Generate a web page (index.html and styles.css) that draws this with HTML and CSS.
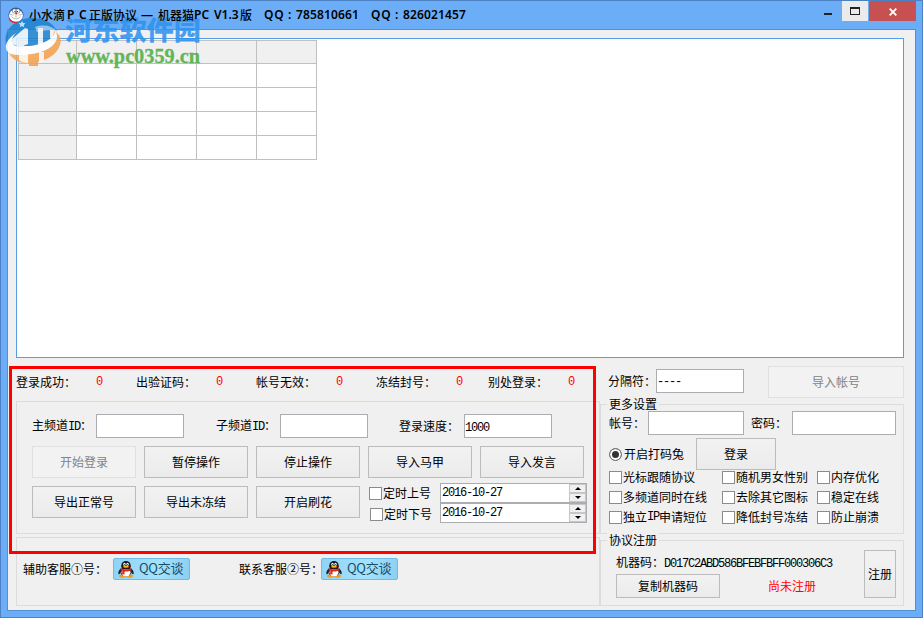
FILE: index.html
```html
<!DOCTYPE html>
<html lang="zh-CN">
<head>
<meta charset="utf-8">
<title>机器猫PC V1.3版</title>
<link rel="stylesheet" href="styles.css">
</head>
<body>
<svg class="defs" width="0" height="0" aria-hidden="true">
  <defs>
    <linearGradient id="orange" x1="0" y1="0" x2="1" y2="1"><stop offset="0" stop-color="#f6b36c"/><stop offset="1" stop-color="#f39b45"/></linearGradient>
    <symbol id="penguin" viewBox="0 0 16 17">
      <ellipse cx="4.700" cy="15" rx="3.700" ry="1.800" fill="#f39a1e"/><ellipse cx="11.300" cy="15" rx="3.700" ry="1.800" fill="#f39a1e"/>
      <path d="M3.200 7C1 9 0 11 .4 13c.6.6 1.600-.3 2.200-1.200zM12.800 7c2.200 2 3.200 4 2.800 6-.6.6-1.600-.3-2.200-1.200z" fill="#1b1b24"/>
      <ellipse cx="8" cy="10.500" rx="5.600" ry="5" fill="#1b1b24"/><ellipse cx="8" cy="11.300" rx="4.500" ry="4.100" fill="#fff"/>
      <path d="M8 0C4.600 0 3.300 2.400 3.200 5.300 3.200 7.500 5 8.500 8 8.500s4.800-1 4.800-3.200C12.700 2.400 11.400 0 8 0z" fill="#1b1b24"/>
      <ellipse cx="6.500" cy="3.300" rx="1.200" ry="1.500" fill="#fff"/><ellipse cx="9.500" cy="3.300" rx="1.200" ry="1.500" fill="#fff"/>
      <circle cx="6.800" cy="3.500" r=".55"/><circle cx="9.200" cy="3.500" r=".55"/>
      <ellipse cx="8" cy="5.700" rx="3" ry="1" fill="#f7b21c"/>
      <path d="M2.800 7.100C5.500 9 10.500 9 13.200 7.100l.3 2C11 10.500 9 10.700 6.600 10.500l-.2 3-2.300-.3.300-3.400-1.900-.9z" fill="#e3261d"/>
    </symbol>
  </defs>
</svg>
<div class="window">
  <header class="titlebar">
    <svg class="appicon" width="16" height="16" viewBox="0 0 16 16">
      <circle cx="8" cy="8" r="7.600" fill="#315b9d"/><ellipse cx="8" cy="8.600" rx="7" ry="6.300" fill="#fff"/>
      <ellipse cx="6.300" cy="4" rx="1.900" ry="2.200" fill="#fff" stroke="#444" stroke-width=".5"/><ellipse cx="10" cy="4" rx="1.900" ry="2.200" fill="#fff" stroke="#444" stroke-width=".5"/>
      <circle cx="7" cy="4.500" r=".6"/><circle cx="9.300" cy="4.500" r=".6"/><circle cx="8.200" cy="6.500" r="1" fill="#d22"/>
      <path d="M8 7.500v3M3.500 9.500c2 3 7 3 9 0M2 7.500l3.500.6M14 7.500l-3.500.6" fill="none" stroke="#777" stroke-width=".5"/>
      <path d="M1 11.500C3 15.300 6.500 15.800 9.500 15" fill="none" stroke="#d22" stroke-width="1.200"/>
    </svg>
    <div class="title">
      <span class="t1">小水滴</span><span class="t2">P</span><span class="t3">C</span><span class="t4">正版协议</span><span class="t5">—</span><span class="t6">机器猫</span><span class="t7">PC</span><span class="t8">V1.3</span><span class="t9">版</span><span class="t10">QQ</span><span class="t11">:</span><span class="t12">785810661</span><span class="t10">QQ</span><span class="t11">:</span><span class="t12">826021457</span>
    </div>
    <div class="controls">
      <div class="ctl min"><i></i></div>
      <div class="ctl max"><i></i></div>
      <div class="ctl close"><svg width="8" height="8" viewBox="0 0 8 8"><path d="M.7.7l6.600 6.600M7.300.7L.7 7.300" stroke="#fff" stroke-width="1.900"/></svg></div>
    </div>
  </header>
  <main class="client">
    <section class="list">
      <div class="grid">
        <b></b><b></b><b></b><b></b><b></b>
        <b></b><i></i><i></i><i></i><i></i>
        <b></b><i></i><i></i><i></i><i></i>
        <b></b><i></i><i></i><i></i><i></i>
        <b></b><i></i><i></i><i></i><i></i>
      </div>
    </section>
    <div class="lower">
      <div class="left">
        <div class="stats">
          <span>登录成功：</span><em>0</em><span>出验证码：</span><em>0</em><span>帐号无效：</span><em>0</em><span>冻结封号：</span><em>0</em><span>别处登录：</span><em>0</em>
        </div>
        <section class="group main">
          <div class="fields">
            <label>主频道<span class="m">ID</span>：</label><div class="input"></div>
            <label>子频道<span class="m">ID</span>：</label><div class="input"></div>
            <label>登录速度：</label><div class="input"><span class="m">1000</span></div>
          </div>
          <div class="buttons">
            <div class="btn off">开始登录</div><div class="btn">暂停操作</div><div class="btn">停止操作</div><div class="btn">导入马甲</div><div class="btn">导入发言</div>
          </div>
          <div class="buttons second">
            <div class="btn">导出正常号</div><div class="btn">导出未冻结</div><div class="btn">开启刷花</div>
            <div class="timers">
              <div class="check"><i></i>定时上号</div>
              <div class="check shifted"><i></i>定时下号</div>
            </div>
            <div class="dates">
              <div class="date"><span class="m">2016-10-27</span><div class="spin"><u><s class="up"></s></u><u><s class="down"></s></u></div></div>
              <div class="date"><span class="m">2016-10-27</span><div class="spin"><u><s class="up"></s></u><u><s class="down"></s></u></div></div>
            </div>
          </div>
        </section>
        <section class="group support">
          <span class="s1">辅助客服①号：</span>
          <div class="qq"><svg width="16" height="17"><use href="#penguin"/></svg><span>QQ交谈</span></div>
          <span class="s2">联系客服②号：</span>
          <div class="qq"><svg width="16" height="17"><use href="#penguin"/></svg><span>QQ交谈</span></div>
        </section>
      </div>
      <div class="right">
        <div class="import"><label>分隔符：</label><div class="input"><span class="m">----</span></div><div class="btn off">导入帐号</div></div>
        <section class="group more">
          <h2>更多设置</h2>
          <div class="account"><label>帐号：</label><div class="input a"></div><label class="pw">密码：</label><div class="input p"></div></div>
          <div class="captcha"><span class="radio"></span><span class="rl">开启打码兔</span><div class="btn">登录</div></div>
          <div class="options">
            <div class="check"><i></i>光标跟随协议</div><div class="check"><i></i>随机男女性别</div><div class="check"><i></i>内存优化</div>
            <div class="check"><i></i>多频道同时在线</div><div class="check"><i></i>去除其它图标</div><div class="check"><i></i>稳定在线</div>
            <div class="check"><i></i>独立<span class="m">IP</span>申请短位</div><div class="check"><i></i>降低封号冻结</div><div class="check"><i></i>防止崩溃</div>
          </div>
        </section>
        <section class="group register">
          <h2>协议注册</h2>
          <div class="regbody">
            <div class="reginfo">
              <div class="code">机器码：<span class="m">D017C2ABD586BFEBFBFF000306C3</span></div>
              <div class="copy"><div class="btn">复制机器码</div><span class="red">尚未注册</span></div>
            </div>
            <div class="btn reg">注册</div>
          </div>
        </section>
      </div>
    </div>
  </main>
  <div class="highlight"></div>
  <svg class="watermark" width="210" height="75" viewBox="0 0 210 75">
    <g opacity=".88">
      <path d="M6 45C3 31 14 18 32 18c12 0 21 5 25 13-10-4-22-1-31 5L12 50z" fill="#1e83cf"/>
      <path d="M24 28h26v18H24z" fill="#1e83cf"/>
      <path d="M8 51c12 5 34 4 44-5l2-15c6 3 8 8 6 14-3 9-11 14-22 17v4h-9v-3C19 64 11 59 8 51z" fill="url(#orange)"/>
      <path d="M12 39L25 28l3 1v15l-8 3-8-3z" fill="#e6f2fc"/>
      <path d="M38 28h5v16h-5z" fill="#e6f2fc"/>
      <path d="M19 54h9v9c-4 0-7-1-9-3zM39 52h5v9l-5 2z" fill="#fff" opacity=".85"/>
      <path d="M16 33C5 40 3 50 10 53.500c11 4 34 0 43-8.500 5-5 5-10 2-14 0 6-7 10.500-16 13-10 3-21 4-25 1-4-3-2-8 2-12z" fill="#fff"/>
      <path d="M35 27c9-3 17-1 22 4-6-1-13-1-20 1z" fill="#fff" opacity=".55"/>
      <path d="M22 21l1.200 2 2.300.3-1.700 1.600.4 2.300-2.200-1.100-2.200 1.100.5-2.300-1.700-1.600 2.300-.3z" fill="#cbe7ff"/>
    </g>
    <text class="wm1" x="65" y="40" textLength="136" lengthAdjust="spacingAndGlyphs">河东软件园</text>
    <text class="wm2" x="66" y="63" textLength="134" lengthAdjust="spacingAndGlyphs">www.pc0359.cn</text>
  </svg>
</div>
</body>
</html>
```

FILE: styles.css
```css
* { box-sizing: border-box; }
body { margin: 0; font: 12px/16px "Noto Sans CJK SC", sans-serif; color: #000; overflow: hidden; }
i, em, u, s, b { font-style: normal; text-decoration: none; font-weight: normal; display: block; }
.defs { position: absolute; }
.window { position: relative; width: 923px; height: 618px; background: #6badf6; border: 1px solid #4c82c3; padding: 0 6px 6px; white-space: nowrap; }

.titlebar { position: relative; z-index: 2; display: flex; height: 28px; align-items: flex-start; }
.appicon { margin: 6px 0 0 1px; }
.title { display: flex; flex: 1; margin: 5px 0 0 5px; height: 17px; line-height: 17px; font-family: "Noto Sans", "Noto Sans CJK SC", sans-serif; font-weight: 600; font-size: 12px; }
.title span { flex: none; }
.t1, .t4, .t6, .t9 { font-family: "Noto Sans CJK SC", sans-serif; font-weight: 500; }
.t1 { width: 38px; }
.t2 { width: 12px; }
.t3 { width: 10px; }
.t4 { width: 52px; }
.t5 { width: 17px; }
.t6 { width: 36px; }
.t7 { width: 20px; }
.t8 { width: 26px; }
.t9 { width: 24px; }
.t10 { width: 24px; letter-spacing: .8px; }
.t11 { width: 8px; }
.t12 { width: 75px; letter-spacing: .13px; }
.controls { display: flex; height: 20px; }
.ctl { display: flex; align-items: center; justify-content: center; height: 20px; }
.min { width: 28px; }
.min i { width: 8px; height: 2px; background: #222; margin-top: 6px; }
.max { width: 26px; background: #ebebeb; margin-right: 1px; }
.max i { width: 10px; height: 8px; border: 1px solid #222; border-top-width: 2px; }
.close { width: 47px; background: #c75050; }
.close svg { margin: 1px 0 0 1px; }

.client { height: 582px; border: 1px solid #5490d2; background: #f0f0f0; padding: 8px 11px 0 8px; }
.list { width: 888px; height: 320px; background: #fff; border: 1px solid #569de5; padding: 1px; }
.grid { display: grid; width: 299px; height: 120px; grid-template-columns: 58px repeat(4, 60px); grid-template-rows: 23px repeat(4, 24px); border-top: 1px solid #c0c0c0; border-left: 1px solid #c0c0c0; }
.grid b, .grid i { border-right: 1px solid #c0c0c0; border-bottom: 1px solid #c0c0c0; }
.grid b { background: #f0f0f0; }

.lower { display: flex; margin-top: 8px; height: 240px; }
.left { width: 584px; }
.right { width: 304px; }
.m { font-family: "Liberation Mono", monospace; font-size: 12px; letter-spacing: -1.2px; }
.group { border: 1px solid #dcdcdc; }
.btn { display: flex; align-items: center; justify-content: center; flex: none; width: 104px; height: 32px; border: 1px solid #bcbcbc; background: linear-gradient(#f2f2f2, #ebebeb); }
.btn.off { color: #838383; border-color: #e0e0e0; background: #f2f2f2; }
.input { flex: none; width: 88px; height: 24px; border: 1px solid #abadb3; background: #fff; line-height: 21px; }

.stats { display: grid; grid-template-columns: 80px 40px 80px 40px 80px 40px 80px 32px 80px 21px; height: 35px; padding-top: 8px; }
.stats em { color: #f00; font: 12px/17px "Liberation Mono", monospace; }
.main { height: 133px; padding: 12px 0 0 15px; }
.fields { display: grid; grid-template-columns: 64px 120px 64px 119px 65px 88px; align-items: center; }
.buttons { display: flex; gap: 8px; margin-top: 8px; }
.check { display: flex; align-items: center; height: 20px; }
.check i { flex: none; width: 13px; height: 13px; border: 1px solid #8b8b8b; background: #fff; margin-right: 1px; }
.timers { margin: -3px 0 0 1px; width: 63px; }
.shifted { margin: 1px 0 0 1px; }
.timers + .dates { margin-top: -3px; }
.date { display: flex; width: 147px; height: 20px; border: 1px solid #abadb3; background: #fff; line-height: 18px; padding-left: 1px; }
.date .m { flex: 1; }
.spin { width: 17px; }
.spin u { height: 9px; border: 1px solid #c6c6c6; background: #f0f0f0; display: flex; align-items: center; justify-content: center; }
.up, .down { border: 3px solid transparent; border-top: 0; border-bottom: 3px solid #000; width: 0; height: 0; }
.down { border-bottom: 0; border-top: 3px solid #000; }
.support { height: 69px; margin-top: 3px; padding: 20px 0 0 6px; display: flex; align-items: flex-start; }
.support > span { margin-top: 3px; flex: none; }
.s1 { width: 90px; }
.s2 { width: 82px; margin-left: 49px; }
.qq { display: flex; align-items: center; flex: none; width: 77px; height: 22px; padding-left: 4px; border: 1px solid #6cbce8; border-radius: 2px; background: linear-gradient(100deg, #8fd4f5, #a5e2fd 60%, #8acff2); color: #174c68; font-size: 13px; }
.qq span { margin: -2px 0 0 5px; letter-spacing: -.3px; }

.import { display: flex; height: 38px; padding-left: 8px; }
.import label { width: 48px; margin-top: 7px; }
.import .input { margin: 3px 24px 0 0; line-height: 19px; }
.import .btn { width: 136px; }
h2 { font-size: 12px; line-height: 16px; font-weight: normal; margin: 0 0 0 6px; padding: 0 2px; width: 52px; height: 16px; background: #f0f0f0; }
.more { height: 130px; }
.more h2 { margin-top: -9px; }
.account { display: flex; margin: -1px 0 0 8px; align-items: center; height: 24px; }
.account label { width: 39px; }
.account .a { width: 96px; }
.account .pw { margin-left: 7px; width: 41px; }
.account .p { width: 104px; }
.captcha { display: flex; align-items: center; margin: 3px 0 0 8px; height: 32px; }
.radio { width: 13px; height: 13px; border: 1px solid #777; border-radius: 50%; background: #333; box-shadow: inset 0 0 0 2px #fff; }
.rl { width: 72px; margin-left: 2px; }
.captcha .btn { width: 80px; }
.options { display: grid; grid-template-columns: 113px 95px 80px; grid-auto-rows: 20px; margin: -3px 0 0 8px; }
.register { height: 66px; margin-top: 6px; }
.register h2 { margin-top: -9px; }
.regbody { display: flex; margin: 2px 0 0 15px; }
.reginfo { width: 248px; }
.code { height: 24px; padding-top: 4px; }
.copy { display: flex; align-items: center; }
.copy .btn { height: 24px; }
.red { color: #f00; margin-left: 48px; }
.reg { width: 32px; height: 48px; }

.highlight { position: absolute; left: 8px; top: 365px; width: 587px; height: 188px; border: 3px solid #f00; }
.watermark { position: absolute; left: -1px; top: -1px; }
.wm1 { font: 900 26px "Noto Sans CJK SC", sans-serif; fill: #2f93ee; fill-opacity: .88; }
.wm2 { font: bold 20px "Liberation Serif", serif; fill: #57b14b; fill-opacity: .92; stroke: #57b14b; stroke-width: .3px; }
```
